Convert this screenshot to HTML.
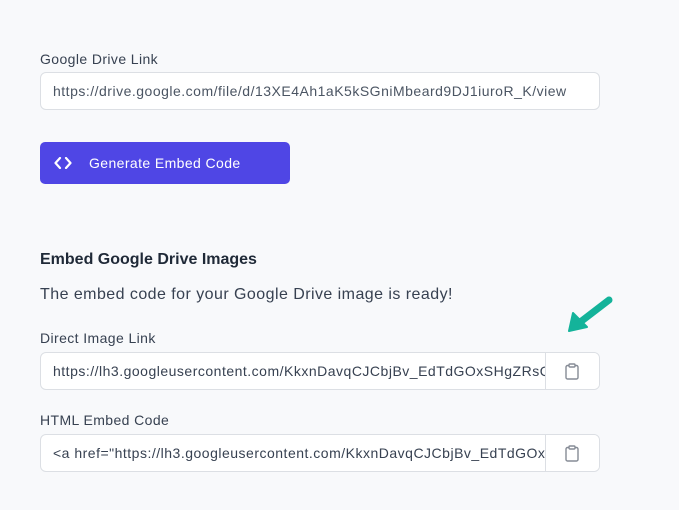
<!DOCTYPE html>
<html><head><style>
body{margin:0;width:679px;height:510px;background:#f8f9fb;font-family:"Liberation Sans",sans-serif;position:relative;overflow:hidden;color:#1f2937;letter-spacing:0.4px}
.lbl{position:absolute;left:40px;font-size:14px;color:#374151}
.inp{position:absolute;left:40px;width:558px;height:36px;background:#fff;border:1px solid #dcdfe4;border-radius:6px;box-sizing:content-box;overflow:hidden}
.inp span{position:absolute;left:12px;top:10px;font-size:14px;color:#4b5563;white-space:nowrap;letter-spacing:0.5px}
.txt{position:absolute;left:12px;top:10px;width:492px;overflow:hidden;font-size:14px;color:#374151;white-space:nowrap;letter-spacing:0.5px}
.cp{position:absolute;right:0;top:0;width:53px;height:36px;border-left:1px solid #dcdfe4;background:#fff}
.cp svg{position:absolute;left:19px;top:10px}
</style></head><body>
<div class="lbl" style="top:51px">Google Drive Link</div>
<div class="inp" style="top:72px"><span>https://drive.google.com/file/d/13XE4Ah1aK5kSGniMbeard9DJ1iuroR_K/view</span></div>
<div style="position:absolute;left:40px;top:142px;width:250px;height:42px;background:#4f46e5;border-radius:5px;color:#fff;font-size:14px">
<svg style="position:absolute;left:14px;top:15px" width="18" height="12" viewBox="0 0 18 12"><path d="M6 1L1.5 6L6 11M12 1L16.5 6L12 11" fill="none" stroke="#fff" stroke-width="2.2" stroke-linecap="round" stroke-linejoin="round"/></svg>
<span style="position:absolute;left:49px;top:13px">Generate Embed Code</span></div>
<div style="position:absolute;left:40px;top:251px;font-size:16px;font-weight:bold;color:#1f2937;letter-spacing:0">Embed Google Drive Images</div>
<div style="position:absolute;left:40px;top:286px;font-size:16px;color:#374151;letter-spacing:0.45px">The embed code for your Google Drive image is ready!</div>
<svg style="position:absolute;left:565px;top:293px" width="52" height="40" viewBox="0 0 52 40"><path d="M44 7L14 30" stroke="#14b39a" stroke-width="7" stroke-linecap="round"/><path d="M4 38L8 20L22 34Z" fill="#14b39a" stroke="#14b39a" stroke-width="2" stroke-linejoin="round"/></svg>
<div class="lbl" style="top:330px">Direct Image Link</div>
<div class="inp" style="top:352px"><div class="txt">https://lh3.googleusercontent.com/KkxnDavqCJCbjBv_EdTdGOxSHgZRsQx</div><div class="cp"><svg width="14" height="17" viewBox="0 0 14 17"><rect x="1" y="2.5" width="12" height="13.5" rx="1.5" fill="none" stroke="#858b95" stroke-width="1.4"/><rect x="4" y="1" width="6" height="3" rx="1" fill="#fff" stroke="#858b95" stroke-width="1.4"/></svg></div></div>
<div class="lbl" style="top:412px">HTML Embed Code</div>
<div class="inp" style="top:434px"><div class="txt">&lt;a href="https://lh3.googleusercontent.com/KkxnDavqCJCbjBv_EdTdGOx</div><div class="cp"><svg width="14" height="17" viewBox="0 0 14 17"><rect x="1" y="2.5" width="12" height="13.5" rx="1.5" fill="none" stroke="#858b95" stroke-width="1.4"/><rect x="4" y="1" width="6" height="3" rx="1" fill="#fff" stroke="#858b95" stroke-width="1.4"/></svg></div></div>
</body></html>
